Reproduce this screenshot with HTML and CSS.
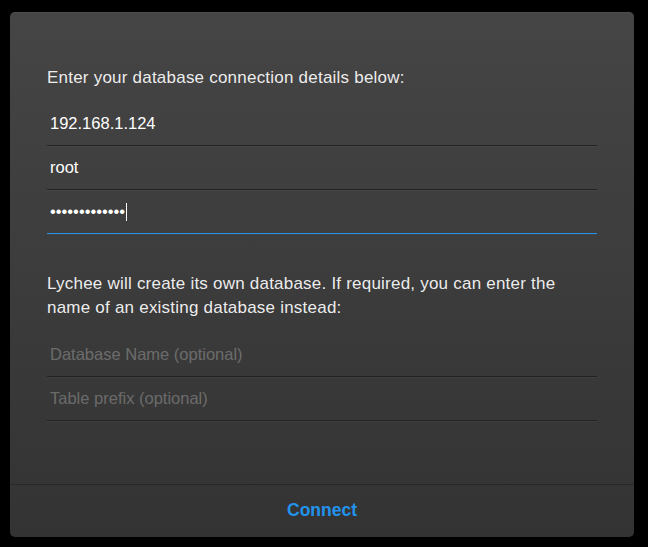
FILE: index.html
```html
<!DOCTYPE html>
<html>
<head>
<meta charset="utf-8">
<link rel="stylesheet" href="styles.css">
</head>
<body>
<div class="modal">
  <div class="content">
    <p class="intro">Enter your database connection details below:</p>
    <div class="fields">
      <div class="field">192.168.1.124</div>
      <div class="field">root</div>
      <div class="field focus"><span class="dots">•••••••••••••</span><span class="caret"></span></div>
    </div>
    <p class="note">Lychee will create its own database. If required, you can enter the name of an existing database instead:</p>
    <div class="fields">
      <div class="field placeholder">Database Name (optional)</div>
      <div class="field placeholder">Table prefix (optional)</div>
    </div>
  </div>
  <div class="footer">
    <div class="button">Connect</div>
  </div>
</div>
</body>
</html>
```
FILE: styles.css
```css
html, body {
  margin: 0;
  background: #000;
}
body {
  padding: 12px 14px 10px 10px;
  font-family: "Liberation Sans", Arial, sans-serif;
}
.modal {
  width: 624px;
  height: 525px;
  border-radius: 5px;
  background: linear-gradient(to bottom, #454545, #333333);
  box-shadow: inset 0 1px 0 rgba(255,255,255,.05);
  display: flex;
  flex-direction: column;
  overflow: hidden;
}
.content {
  flex: 1;
  padding: 54px 37px 0 37px;
}
p {
  margin: 0;
  color: rgba(255,255,255,.92);
  font-size: 17px;
  letter-spacing: 0.22px;
  line-height: 24px;
}
.intro {
  margin-bottom: 12px;
}
.note {
  margin-top: 38px;
  margin-bottom: 13px;
}
.fields {
  display: flex;
  flex-direction: column;
}
.field {
  height: 43px;
  padding: 0 3px;
  display: flex;
  align-items: center;
  color: #fff;
  font-size: 16.5px;
  border-bottom: 1px solid #222;
  box-shadow: 0 1px 0 rgba(255,255,255,.04);
}
.field.focus {
  border-bottom-color: #2293ec;
}
.field.placeholder {
  color: rgba(255,255,255,.27);
}
.caret {
  width: 1px;
  height: 18px;
  background: #fff;
  margin-left: 1px;
}
.footer {
  height: 50px;
  padding-bottom: 2px;
  border-top: 1px solid rgba(0,0,0,.22);
  display: flex;
  align-items: center;
  justify-content: center;
}
.button {
  color: #2293ec;
  font-weight: 700;
  font-size: 17.5px;
}
```
